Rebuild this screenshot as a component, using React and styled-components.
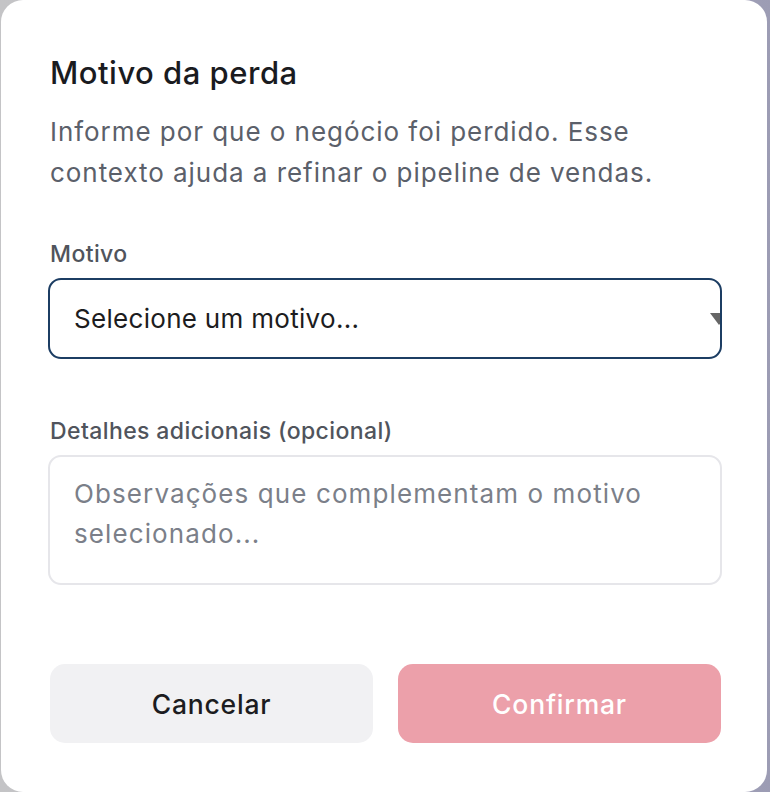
import React from "react";
import styled, { createGlobalStyle } from "styled-components";

const Global = createGlobalStyle`
  html, body { margin: 0; padding: 0; height: 100%; }
  body {
    font-family: Inter, "Noto Sans", sans-serif;
    font-optical-sizing: none;
    font-variation-settings: "opsz" 14;
    background: linear-gradient(90deg, #c4c4c6 0%, #b9b9c9 60%, #9c9cb4 100%);
    -webkit-font-smoothing: antialiased;
  }
  #root { height: 100%; }
`;

const Backdrop = styled.div`
  height: 792px;
  padding: 0 3px 0 1px;
  box-sizing: border-box;
  display: flex;
`;

const Card = styled.div`
  flex: 1;
  background: #ffffff;
  border-radius: 22px;
  padding: 56px 45px 0 47px;
  box-sizing: border-box;
  display: flex;
  flex-direction: column;
`;

const Title = styled.h2`
  margin: 0;
  font-size: 31px;
  line-height: 34px;
  font-weight: 500;
  letter-spacing: 0.5px;
  color: #1a1b1f;
  padding-left: 2px;
`;

const Description = styled.p`
  margin: 21px 0 0;
  font-size: 26px;
  line-height: 41px;
  font-weight: 400;
  letter-spacing: 0.95px;
  color: #5b606a;
  padding-left: 2px;
`;

const Field = styled.div`
  display: flex;
  flex-direction: column;
  margin-top: ${(p) => p.$top}px;
`;

const Label = styled.label`
  font-size: 23px;
  line-height: 28px;
  font-weight: 500;
  letter-spacing: 0.4px;
  color: #50545c;
  margin-bottom: 10px;
  padding-left: 2px;
`;

const SelectBox = styled.div`
  position: relative;
  height: 81px;
  border: 2px solid #1c3d63;
  border-radius: 13px;
  box-sizing: border-box;
  display: flex;
  align-items: center;
  padding: 0 24px;
  overflow: hidden;
  font-size: 26px;
  letter-spacing: 0.3px;
  color: #1c1c20;
`;

const Arrow = styled.svg`
  position: absolute;
  right: -8px;
  top: 33px;
  width: 18px;
  height: 12px;
`;

const TextArea = styled.div`
  height: 130px;
  border: 2px solid #e6e6ea;
  border-radius: 13px;
  box-sizing: border-box;
  padding: 17px 24px;
  font-size: 26px;
  line-height: 40px;
  letter-spacing: 1.1px;
  color: #7b7f89;
`;

const Actions = styled.div`
  display: grid;
  grid-template-columns: 1fr 1fr;
  gap: 25px;
  margin-top: 79px;
  padding: 0 1px 0 2px;
`;

const Button = styled.button`
  height: 79px;
  border: none;
  border-radius: 15px;
  font-family: inherit;
  font-variation-settings: inherit;
  font-size: 26.5px;
  font-weight: 500;
  letter-spacing: 0.8px;
  background: ${(p) => (p.$primary ? "#eca0aa" : "#f1f1f3")};
  color: ${(p) => (p.$primary ? "#ffffff" : "#1c1c20")};
  cursor: pointer;
`;

export default function App() {
  return (
    <>
      <Global />
      <Backdrop>
        <Card>
          <Title>Motivo da perda</Title>
          <Description>
            Informe por que o negócio foi perdido. Esse contexto ajuda a refinar o pipeline de vendas.
          </Description>
          <Field $top={47}>
            <Label>Motivo</Label>
            <SelectBox>
              Selecione um motivo...
              <Arrow viewBox="0 0 18 12">
                <polygon points="0,0 18,0 9,12" fill="#666666" />
              </Arrow>
            </SelectBox>
          </Field>
          <Field $top={58}>
            <Label>Detalhes adicionais (opcional)</Label>
            <TextArea>Observações que complementam o motivo selecionado...</TextArea>
          </Field>
          <Actions>
            <Button>Cancelar</Button>
            <Button $primary>Confirmar</Button>
          </Actions>
        </Card>
      </Backdrop>
    </>
  );
}
